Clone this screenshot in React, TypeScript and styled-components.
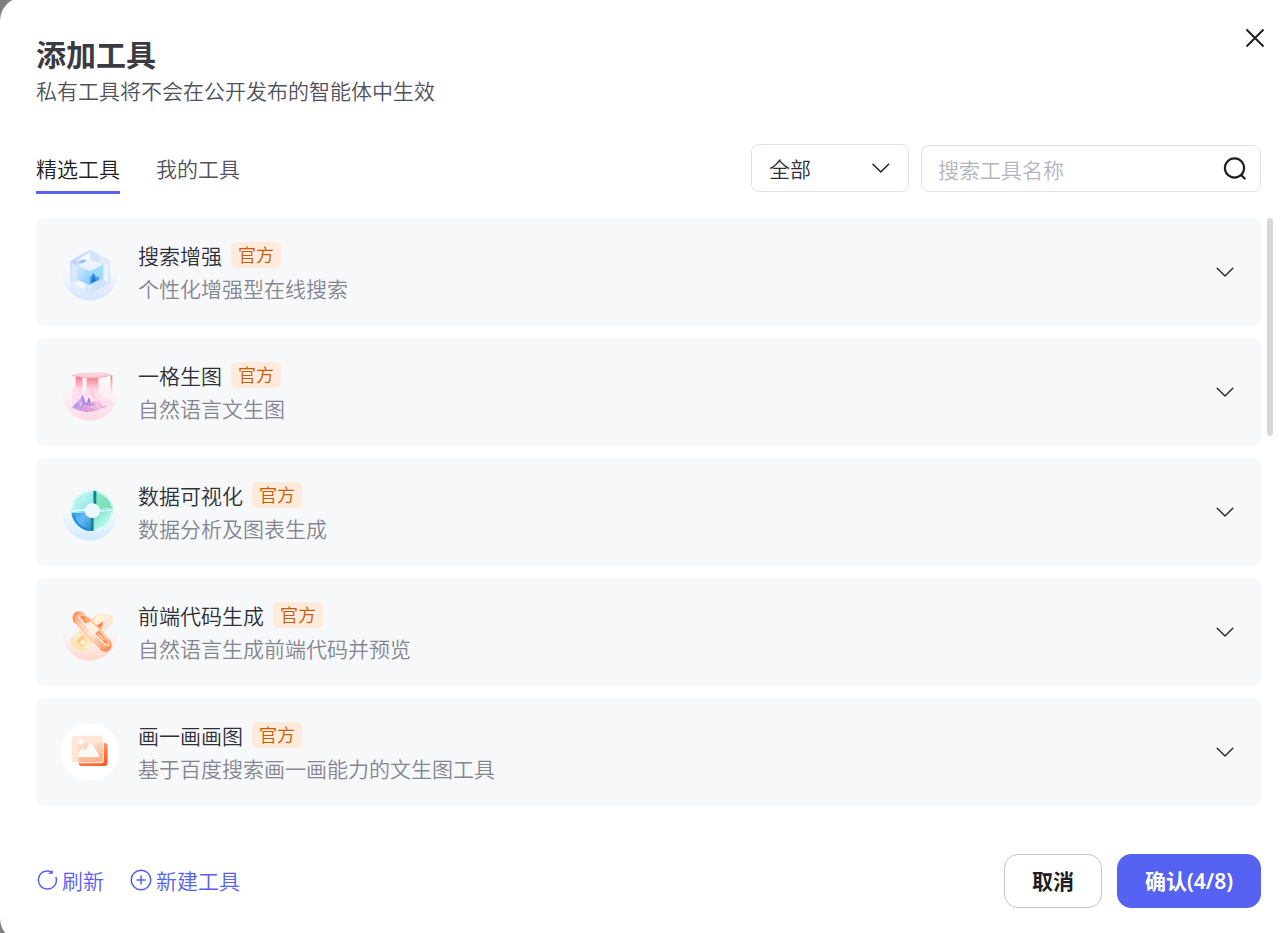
import React from "react";
import styled, { createGlobalStyle } from "styled-components";

const GlobalStyle = createGlobalStyle`
  *, *::before, *::after { box-sizing: border-box; }
  body { margin: 0; background: #7f7f7f; }
  body, button, input, select {
    font-family: "Noto Sans CJK SC", "Noto Sans", sans-serif;
    font-size: 21px;
    font-weight: 350;
  }
  h1, h2, p, ul { margin: 0; padding: 0; }
  button { padding: 0; border: 0; background: none; cursor: pointer; }
  svg { display: block; flex: none; }
`;

const Backdrop = styled.div`
  min-height: 100vh;
  display: flex;
  overflow: hidden;
  background: #7f7f7f;
`;

const Dialog = styled.main`
  flex: 1;
  min-width: 0;
  margin: -3px -24px -9px 0;
  padding: 38px 24px 34px 36px;
  display: flex;
  flex-direction: column;
  border-radius: 24px;
  background: #fff;
`;

const Header = styled.header`
  display: flex;
  justify-content: space-between;
  align-items: flex-start;
  padding-right: 13px;
`;

const Title = styled.h1`
  font-size: 30px;
  line-height: 36px;
  font-weight: 700;
  color: #3a3b42;
`;

const Subtitle = styled.p`
  line-height: 38px;
  color: #50525c;
`;

const CloseButton = styled.button`
  margin-top: -10px;
  color: #1e1f24;
`;

const Toolbar = styled.div`
  display: flex;
  align-items: flex-start;
  justify-content: space-between;
  margin: 35px 20px 24px 0;
`;

const Tabs = styled.div`
  display: flex;
  gap: 36px;
`;

const Tab = styled.button<{ $active?: boolean }>`
  height: 50px;
  line-height: 44px;
  border-bottom: 3px solid ${(p) => (p.$active ? "#5562f2" : "transparent")};
  color: ${(p) => (p.$active ? "#1e1f24" : "#50525c")};
`;

const Filters = styled.div`
  display: flex;
  align-items: flex-end;
  gap: 12px;
`;

const Field = styled.label<{ $width: number; $height: number }>`
  display: flex;
  align-items: center;
  width: ${(p) => p.$width}px;
  height: ${(p) => p.$height}px;
  padding: 0 13px 0 16px;
  border: 1px solid #dfe0ea;
  border-radius: 8px;
  color: #1e1f24;
`;

const Select = styled.select`
  flex: 1;
  min-width: 0;
  padding: 0 0 0 1px;
  border: 0;
  outline: 0;
  appearance: none;
  background: none;
  color: #303138;
`;

const SearchInput = styled.input`
  flex: 1;
  min-width: 0;
  padding: 0;
  border: 0;
  outline: 0;
  background: none;
  &::placeholder { color: #b3b5c0; opacity: 1; }
`;

const ListArea = styled.div`
  display: flex;
  gap: 6px;
  padding-right: 8px;
`;

const List = styled.ul`
  flex: 1;
  min-width: 0;
  display: grid;
  gap: 12px;
  list-style: none;
`;

const ScrollThumb = styled.div`
  width: 6px;
  height: 218px;
  border-radius: 3px;
  background: #d8d8d8;
`;

const Row = styled.li`
  display: flex;
  align-items: center;
  gap: 19px;
  height: 108px;
  padding: 0 26px 0 25px;
  border-radius: 9px;
  background: #f7f8fa;
`;

const RowText = styled.div`
  flex: 1;
  min-width: 0;
`;

const NameLine = styled.div`
  display: flex;
  align-items: center;
  gap: 9px;
`;

const Name = styled.h2`
  font-size: 21px;
  line-height: 32px;
  font-weight: 350;
  color: #303138;
`;

const Badge = styled.span`
  padding: 0 7px 1px;
  border-radius: 5px;
  background: #ffebdb;
  color: #c25e0a;
  font-size: 18px;
  line-height: 25px;
`;

const Description = styled.p`
  line-height: 34px;
  color: #848691;
`;

const ExpandButton = styled.button`
  color: #303138;
`;

const Footer = styled.footer`
  display: flex;
  align-items: center;
  justify-content: space-between;
  margin-top: auto;
  padding: 24px 20px 0 0;
`;

const Actions = styled.div<{ $gap: number }>`
  display: flex;
  gap: ${(p) => p.$gap}px;
`;

const LinkButton = styled.button`
  display: flex;
  align-items: center;
  gap: 4px;
  padding-bottom: 2px;
  color: #5562f2;
`;

const Button = styled.button<{ $primary?: boolean }>`
  height: 54px;
  padding: 0 27px 2px;
  border: 1px solid ${(p) => (p.$primary ? "#5562f2" : "#c0c3d2")};
  border-radius: 14px;
  background: ${(p) => (p.$primary ? "#5562f2" : "#fff")};
  color: ${(p) => (p.$primary ? "#fff" : "#1e1f24")};
  font-family: "Noto Sans", "Noto Sans CJK SC", sans-serif;
  font-weight: ${(p) => (p.$primary ? 600 : 700)};
`;

const Chevron = () => (
  <svg width="20" height="20" viewBox="0 0 20 20" fill="none" stroke="currentColor" strokeWidth="1.5" strokeLinecap="round" strokeLinejoin="round">
    <path d="M2.2 6.2 10 14l7.8-7.8" />
  </svg>
);

const CubeIcon = () => (
  <svg width="58" height="58" viewBox="33 24 174 174" aria-hidden="true">
    <defs>
      <linearGradient id="cubeGlow" x1="0" y1="0" x2="0" y2="1">
        <stop offset=".45" stopColor="#dfeaff" stopOpacity="0" />
        <stop offset="1" stopColor="#d3e3ff" />
      </linearGradient>
      <linearGradient id="cubeShell" x1="0" y1="0" x2="1" y2="1">
        <stop offset="0" stopColor="#a9c4f3" />
        <stop offset=".5" stopColor="#e6f0ff" />
        <stop offset="1" stopColor="#b7d3fb" />
      </linearGradient>
      <linearGradient id="cubeFace" x1="0" y1="0" x2="1" y2="1">
        <stop offset="0" stopColor="#d5e8ff" />
        <stop offset="1" stopColor="#7fcafc" />
      </linearGradient>
    </defs>
    <circle cx="120" cy="113" r="84" fill="url(#cubeGlow)" />
    <path d="M120 44 180 78V144L120 176 61 144V78Z" fill="url(#cubeShell)" />
    <path d="M120 50 162 74 120 91 78 78Z" fill="#f2f7ff" />
    <path d="M84 76 105 72 120 86 84 96Z" fill="#c1d8fb" />
    <path d="M88 82 104 74 106 79 95 84Z" fill="#83b4f2" />
    <path d="M120 50 158 72 143 86 120 74Z" fill="#d4e3fb" />
    <path d="M65 83 82 94V138L65 142Z" fill="#dbe7fb" />
    <path d="M176 82 160 91V138L176 142Z" fill="#e9f2ff" />
    <path d="M82 92 120 108V150L82 134Z" fill="url(#cubeFace)" />
    <path d="M120 108 160 88V132L120 150Z" fill="#a1dbfd" />
    <path d="M82 91 120 75 160 88 120 108Z" fill="#eaf3ff" />
    <path d="M120 147V126L131 114 139 127 146 123 147 134Z" fill="#4b9aed" />
    <path d="M123 144 131 117 138 138Z" fill="#2275cf" />
    <path d="M66 143 92 138 105 149 103 164Z" fill="#f7fbff" />
    <path d="M120 151 160 134 176 143 120 172Z" fill="#cfe3ff" />
    <path d="M120 151V173" stroke="#f8fcff" strokeWidth="2" />
    <path d="M120 45 179 79V144L120 175 62 144V79Z" fill="none" stroke="#d8e7ff" strokeWidth="2" />
  </svg>
);

const PrismIcon = () => (
  <svg width="58" height="58" viewBox="33 24 174 174" aria-hidden="true">
    <defs>
      <linearGradient id="prismGlow" x1="0" y1="0" x2="0" y2="1">
        <stop offset=".45" stopColor="#ffe3ec" stopOpacity="0" />
        <stop offset="1" stopColor="#ffd6e1" />
      </linearGradient>
      <linearGradient id="prismRed" x1="0" y1="0" x2="0" y2="1">
        <stop offset="0" stopColor="#f3708a" />
        <stop offset=".55" stopColor="#fdcbd8" />
        <stop offset="1" stopColor="#fde8f1" stopOpacity=".3" />
      </linearGradient>
      <linearGradient id="prismWhite" x1="0" y1="0" x2="0" y2="1">
        <stop offset="0" stopColor="#fffafa" />
        <stop offset=".75" stopColor="#fdeaf2" />
        <stop offset="1" stopColor="#fce3ed" stopOpacity=".3" />
      </linearGradient>
      <linearGradient id="prismPeak" x1="0" y1="0" x2="1" y2="0">
        <stop offset="0" stopColor="#b39cf4" />
        <stop offset=".45" stopColor="#cf8fe0" />
        <stop offset="1" stopColor="#ffc0d4" />
      </linearGradient>
    </defs>
    <circle cx="120" cy="113" r="84" fill="url(#prismGlow)" />
    <path d="M64 61 187 60V148L164 164H83L65 150Z" fill="url(#prismWhite)" />
    <path d="M77 65 98 66V124H77ZM109 69 146 68V124H109ZM182 62 187 61V128H182Z" fill="url(#prismRed)" />
    <path d="M98 65H109V142H98ZM146 68H153V145H146Z" fill="#fff1f3" />
    <path d="M64 61 89 54 158 52 186 60 147 69 108 70Z" fill="#fbd1d9" />
    <path d="M66 62 108 69 147 68 185 61" fill="none" stroke="#f39bad" strokeWidth="2" />
    <path d="M66 98 84 95 94 110 109 106 122 97 136 118 146 108 158 128 187 139V154H66Z" fill="#fbdcec" opacity=".7" />
    <path d="M65 158 79 142 87 135 98 120 106 137 111 142 117 128 124 142 137 139 162 157 142 167 110 172 83 166Z" fill="url(#prismPeak)" opacity=".8" />
    <path d="M98 120 91 151 81 145 71 158 84 157 99 164 103 148Z" fill="#a896f3" opacity=".85" />
    <path d="M98 124 101 146 112 150 117 130 120 152 132 147" fill="none" stroke="#9d78e0" strokeWidth="3" />
    <path d="M96 140 89 156M108 150 99 160M128 150 121 160M139 146 146 158" fill="none" stroke="#f6e5ff" strokeWidth="3" />
    <path d="M88 162 103 155 110 170 122 159 132 168M146 148 157 158 169 153" fill="none" stroke="#f388b8" strokeWidth="3" />
    <path d="M124 98 129 122 144 137 157 148" fill="none" stroke="#ffb5cb" strokeWidth="3" />
  </svg>
);

const RingIcon = () => (
  <svg width="58" height="58" viewBox="33 24 174 174" aria-hidden="true">
    <defs>
      <linearGradient id="ringGlow" x1="0" y1="0" x2="0" y2="1">
        <stop offset=".45" stopColor="#d8efff" stopOpacity="0" />
        <stop offset="1" stopColor="#cfe9ff" />
      </linearGradient>
      <linearGradient id="ringAqua" x1="0" y1="0" x2="1" y2="1">
        <stop offset="0" stopColor="#7fe0e2" />
        <stop offset=".45" stopColor="#b4f3f1" />
        <stop offset="1" stopColor="#7fe0e4" />
      </linearGradient>
      <linearGradient id="ringGreen" x1="0" y1="0" x2="1" y2="1">
        <stop offset="0" stopColor="#8be9cc" />
        <stop offset="1" stopColor="#7bddb0" />
      </linearGradient>
      <linearGradient id="ringBlue" x1="0" y1="0" x2="1" y2="1">
        <stop offset="0" stopColor="#2c9be4" />
        <stop offset=".45" stopColor="#66baf5" />
        <stop offset="1" stopColor="#2088cd" />
      </linearGradient>
      <linearGradient id="ringMint" x1="0" y1="0" x2="1" y2="1">
        <stop offset="0" stopColor="#6fdfce" />
        <stop offset=".6" stopColor="#b5f5e5" />
        <stop offset="1" stopColor="#7be2d2" />
      </linearGradient>
    </defs>
    <circle cx="120" cy="113" r="84" fill="url(#ringGlow)" />
    <path d="M130 47A61 61 0 0 0 64 107L104 106A22 22 0 0 1 130 85Z" fill="url(#ringAqua)" />
    <path d="M136 47A61 61 0 0 1 189 99L149 103A22 22 0 0 0 136 87Z" fill="url(#ringGreen)" />
    <path d="M64 114A61 61 0 0 0 123 168L122 128A22 22 0 0 1 105 112Z" fill="url(#ringBlue)" />
    <path d="M189 106A61 61 0 0 1 130 167V128A22 22 0 0 0 149 110Z" fill="url(#ringMint)" />
    <path d="M130 47 139 49V89L130 85ZM122 126 131 129V167L122 168Z" fill="#0f8496" />
    <path d="M67 99A61 61 0 0 1 126 49M141 51A59 59 0 0 1 187 94M186 112A60 60 0 0 1 136 165" fill="none" stroke="#d6fff7" strokeWidth="4" />
    <path d="M70 120A60 60 0 0 0 117 165" fill="none" stroke="#128dcc" strokeWidth="4" />
    <path d="M63 105 103 101 104 110 64 115ZM149 102 189 98V104L149 110Z" fill="#d7f9ff" />
    <path d="M65 113 104 109M150 105 188 101" stroke="#5fd0d8" strokeWidth="2" />
    <circle cx="127" cy="107" r="22" fill="#ecf8ff" />
  </svg>
);

const CrossIcon = () => (
  <svg width="58" height="58" viewBox="33 24 174 174" aria-hidden="true">
    <defs>
      <linearGradient id="crossGlow" x1="0" y1="0" x2="0" y2="1">
        <stop offset=".45" stopColor="#ffe4dc" stopOpacity="0" />
        <stop offset="1" stopColor="#ffd6cc" />
      </linearGradient>
      <linearGradient id="crossBar" x1="1" y1="0" x2="0" y2="1">
        <stop offset="0" stopColor="#ffeadb" />
        <stop offset=".4" stopColor="#ffb27a" />
        <stop offset=".7" stopColor="#fff0d4" />
        <stop offset="1" stopColor="#ffd49a" />
      </linearGradient>
      <linearGradient id="crossLoop" x1="0" y1="0" x2="1" y2="0">
        <stop offset="0" stopColor="#ff9b65" />
        <stop offset=".25" stopColor="#ffcdb4" />
        <stop offset=".5" stopColor="#ffeee6" />
        <stop offset=".8" stopColor="#ffb892" />
        <stop offset="1" stopColor="#ff8850" />
      </linearGradient>
    </defs>
    <circle cx="120" cy="113" r="84" fill="url(#crossGlow)" />
    <path d="M148 53 187 63 189 82 106 170 86 167 64 148 63 130Z" fill="url(#crossBar)" />
    <path d="M148 54 185 65 160 78 130 100 122 82Z" fill="#fff1dc" />
    <path d="M132 97 166 76 172 88 150 122 133 112Z" fill="#fb8650" />
    <path d="M138 108 168 82 170 90 148 118Z" fill="#ffb980" />
    <path d="M160 78 187 66 189 82 152 121Z" fill="#ffe6da" />
    <path d="M79 138 98 120 112 141 97 155Z" fill="#ffc980" />
    <path d="M88 142 100 132 109 141 98 151Z" fill="#fff3da" />
    <path d="M65 132 88 149 105 165 88 167 65 148Z" fill="#ffe2ac" />
    <g transform="rotate(46 127 108)">
      <rect x="51" y="89" width="152" height="40" rx="20" fill="url(#crossLoop)" />
      <path d="M62 106C66 88 96 84 127 86C160 86 190 90 198 103L188 108H72Z" fill="#ffc5a4" />
      <path d="M70 101C78 91 94 90 102 91L97 107H74Z" fill="#ff8c50" />
      <path d="M84 92 104 90 101 98 86 104Z" fill="#ffac78" />
      <path d="M104 91H138V109H97Z" fill="#fff0dc" />
      <path d="M141 94 186 97 181 109H137Z" fill="#ff955c" />
      <path d="M148 98H173L170 105H146Z" fill="#ffc294" />
      <path d="M67 109H186" stroke="#fff7f1" strokeWidth="4" />
      <path d="M88 127H168" stroke="#ffbc91" strokeWidth="3" />
      <path d="M57 99C50 110 58 126 74 128M183 128C203 126 207 108 195 98" fill="none" stroke="#ff8b55" strokeWidth="4" />
      <path d="M105 114V125M116 114V126M158 113V124" stroke="#ffc5a5" strokeWidth="3" />
    </g>
  </svg>
);

const PictureIcon = () => (
  <svg width="58" height="58" viewBox="33 33 174 174" aria-hidden="true">
    <defs>
      <linearGradient id="pictureBack" x1="0" y1="0" x2=".6" y2="1">
        <stop offset="0" stopColor="#ffb184" />
        <stop offset="1" stopColor="#fd6227" />
      </linearGradient>
      <linearGradient id="pictureFront" x1="0" y1="0" x2=".3" y2="1">
        <stop offset="0" stopColor="#ffe9dd" />
        <stop offset="1" stopColor="#ffe2d2" />
      </linearGradient>
      <linearGradient id="pictureOverlap" x1="0" y1="0" x2=".3" y2="1">
        <stop offset="0" stopColor="#ffe4d6" />
        <stop offset="1" stopColor="#ffb490" />
      </linearGradient>
    </defs>
    <circle cx="120" cy="120" r="87" fill="#fff" />
    <rect x="86" y="93" width="87" height="69" rx="10" fill="url(#pictureBack)" />
    <rect x="65" y="71" width="97" height="83" rx="11" fill="#fff4ed" />
    <rect x="65" y="71" width="94" height="80" rx="10" fill="url(#pictureFront)" />
    <path d="M86 93H159V141Q159 151 149 151H86Z" fill="url(#pictureOverlap)" />
    <circle cx="93" cy="94" r="8" fill="#f9b591" opacity=".5" />
    <path d="M83 139Q80 138 82 133L95 113Q98 109 102 113L107 119 119 97Q123 91 127 98L147 133Q149 138 144 139Z" fill="#f4a37c" opacity=".45" />
    <circle cx="93" cy="91" r="8" fill="#fff" />
    <path d="M83 136Q80 135 82 130L95 110Q98 106 102 110L107 116 119 94Q123 88 127 95L147 130Q149 135 144 136Z" fill="#fffaf6" />
  </svg>
);

const tools = [
  { name: "搜索增强", description: "个性化增强型在线搜索", Icon: CubeIcon },
  { name: "一格生图", description: "自然语言文生图", Icon: PrismIcon },
  { name: "数据可视化", description: "数据分析及图表生成", Icon: RingIcon },
  { name: "前端代码生成", description: "自然语言生成前端代码并预览", Icon: CrossIcon },
  { name: "画一画画图", description: "基于百度搜索画一画能力的文生图工具", Icon: PictureIcon },
];

export default function App() {
  return (
    <Backdrop>
      <GlobalStyle />
      <Dialog role="dialog" aria-labelledby="dialog-title">
        <Header>
          <div>
            <Title id="dialog-title">添加工具</Title>
            <Subtitle>私有工具将不会在公开发布的智能体中生效</Subtitle>
          </div>
          <CloseButton aria-label="关闭">
            <svg width="26" height="26" viewBox="0 0 26 26" fill="none" stroke="currentColor" strokeWidth="2">
              <path d="m4.5 4.5 17 17M21.5 4.5l-17 17" />
            </svg>
          </CloseButton>
        </Header>

        <Toolbar>
          <Tabs role="tablist">
            <Tab role="tab" aria-selected="true" $active>精选工具</Tab>
            <Tab role="tab" aria-selected="false">我的工具</Tab>
          </Tabs>
          <Filters>
            <Field $width={158} $height={48}>
              <Select aria-label="工具类型">
                <option>全部</option>
              </Select>
              <svg width="28" height="20" viewBox="0 0 28 20" fill="none" stroke="currentColor" strokeWidth="1.5" strokeLinecap="round" strokeLinejoin="round">
                <path d="M6 6.2 13.8 14l7.8-7.8" />
              </svg>
            </Field>
            <Field $width={340} $height={47}>
              <SearchInput type="text" aria-label="搜索工具名称" placeholder="搜索工具名称" />
              <svg width="24" height="24" viewBox="0 0 24 24" fill="none" stroke="currentColor" strokeWidth="2.2">
                <circle cx="11.5" cy="11" r="9.6" />
                <path d="m17.6 17.4 4.8 4.8" />
              </svg>
            </Field>
          </Filters>
        </Toolbar>

        <ListArea>
          <List>
            {tools.map(({ name, description, Icon }) => (
              <Row key={name}>
                <Icon />
                <RowText>
                  <NameLine>
                    <Name>{name}</Name>
                    <Badge>官方</Badge>
                  </NameLine>
                  <Description>{description}</Description>
                </RowText>
                <ExpandButton aria-label={`展开${name}`}>
                  <Chevron />
                </ExpandButton>
              </Row>
            ))}
          </List>
          <ScrollThumb />
        </ListArea>

        <Footer>
          <Actions $gap={26}>
            <LinkButton>
              <svg width="22" height="22" viewBox="0 0 22 22" fill="none" stroke="currentColor" strokeWidth="1.5">
                <path d="M19.9 8A9 9 0 1 1 16.500 3.600" />
                <path d="M12 4.800h4.800V1.300Z" fill="currentColor" stroke="none" />
              </svg>
              刷新
            </LinkButton>
            <LinkButton>
              <svg width="22" height="22" viewBox="0 0 22 22" fill="none" stroke="currentColor" strokeWidth="1.5">
                <circle cx="11" cy="11" r="9.800" />
                <path d="M11 6.500v9M6.500 11h9" />
              </svg>
              新建工具
            </LinkButton>
          </Actions>
          <Actions $gap={15}>
            <Button>取消</Button>
            <Button $primary>确认(4/8)</Button>
          </Actions>
        </Footer>
      </Dialog>
    </Backdrop>
  );
}
